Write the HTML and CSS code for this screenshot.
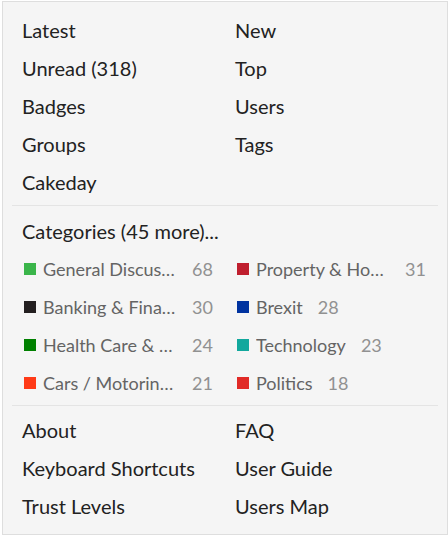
FILE: index.html
```html
<!DOCTYPE html>
<html>
<head>
<meta charset="utf-8">
<link rel="stylesheet" href="styles.css">
</head>
<body>
<div class="page">
  <div class="panel">
    <ul class="grid">
      <li><a>Latest</a></li>
      <li><a>New</a></li>
      <li><a>Unread (318)</a></li>
      <li><a>Top</a></li>
      <li><a>Badges</a></li>
      <li><a>Users</a></li>
      <li><a>Groups</a></li>
      <li><a>Tags</a></li>
      <li><a>Cakeday</a></li>
    </ul>
    <hr class="sep">
    <ul class="grid cats">
      <li class="full"><a>Categories (45 more)...</a></li>
      <li class="cat"><span class="sq" style="background:#3ab54a"></span><span class="name">General Discussion</span><span class="count">68</span></li>
      <li class="cat"><span class="sq" style="background:#bf1e2e"></span><span class="name">Property &amp; Housing</span><span class="count">31</span></li>
      <li class="cat"><span class="sq" style="background:#231f20"></span><span class="name">Banking &amp; Finance</span><span class="count">30</span></li>
      <li class="cat"><span class="sq" style="background:#0033a0"></span><span class="name">Brexit</span><span class="count">28</span></li>
      <li class="cat"><span class="sq" style="background:#008000"></span><span class="name">Health Care &amp; NHS</span><span class="count">24</span></li>
      <li class="cat"><span class="sq" style="background:#12a89d"></span><span class="name">Technology</span><span class="count">23</span></li>
      <li class="cat"><span class="sq" style="background:#ff3a17"></span><span class="name">Cars / Motoring &amp; Transport</span><span class="count">21</span></li>
      <li class="cat"><span class="sq" style="background:#e12a26"></span><span class="name">Politics</span><span class="count">18</span></li>
    </ul>
    <hr class="sep">
    <ul class="grid">
      <li><a>About</a></li>
      <li><a>FAQ</a></li>
      <li><a>Keyboard Shortcuts</a></li>
      <li><a>User Guide</a></li>
      <li><a>Trust Levels</a></li>
      <li><a>Users Map</a></li>
    </ul>
  </div>
</div>
</body>
</html>
```

FILE: styles.css
```css
html, body {
  margin: 0;
  padding: 0;
  background: #ffffff;
}
body {
  font-family: Lato, "Open Sans", sans-serif;
  width: 448px;
  height: 536px;
  overflow: hidden;
}
.page {
  padding: 1px 0 0 2px;
}
.panel {
  box-sizing: border-box;
  width: 446px;
  height: 534px;
  background: #f5f5f5;
  border: 1px solid #dedede;
  padding: 9px 9px 8px 9px;
}
.grid {
  list-style: none;
  margin: 0;
  padding: 0;
  display: grid;
  grid-template-columns: 1fr 1fr;
}
.grid.cats {
  padding-top: 1px;
  margin-bottom: -1px;
}
.grid li {
  height: 38px;
  display: flex;
  align-items: center;
  padding-left: 10px;
  font-size: 20px;
  color: #222222;
  white-space: nowrap;
}
.grid li.full {
  grid-column: 1 / 3;
}
.sep {
  border: 0;
  border-top: 1px solid #e4e4e4;
  margin: 4px 0 5px 0;
  height: 0;
}
.grid li.cat {
  padding-left: 12px;
  font-size: 18px;
}
.sq {
  width: 12px;
  height: 12px;
  flex: none;
  margin-right: 7px;
}
.name {
  color: #646464;
  max-width: 134px;
  overflow: hidden;
  text-overflow: ellipsis;
  white-space: nowrap;
}
.count {
  color: #919191;
  margin-left: 15px;
  font-size: 18px;
}
```
